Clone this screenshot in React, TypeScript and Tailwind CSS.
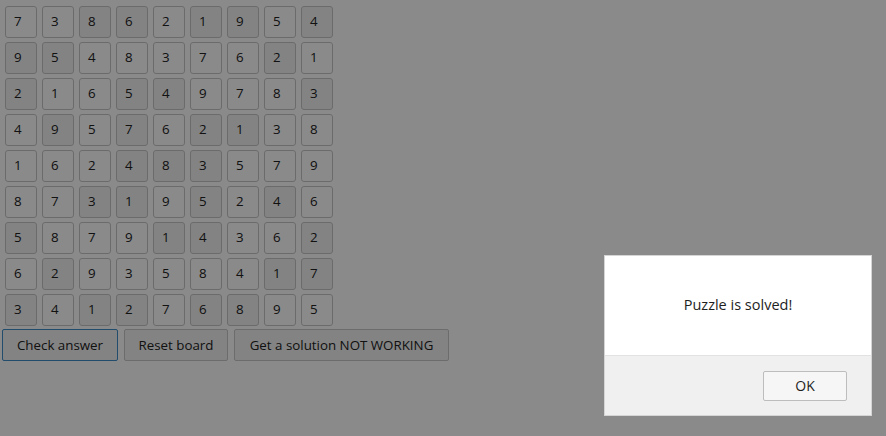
import React from "react";

const board = [
  [7, 3, 8, 6, 2, 1, 9, 5, 4],
  [9, 5, 4, 8, 3, 7, 6, 2, 1],
  [2, 1, 6, 5, 4, 9, 7, 8, 3],
  [4, 9, 5, 7, 6, 2, 1, 3, 8],
  [1, 6, 2, 4, 8, 3, 5, 7, 9],
  [8, 7, 3, 1, 9, 5, 2, 4, 6],
  [5, 8, 7, 9, 1, 4, 3, 6, 2],
  [6, 2, 9, 3, 5, 8, 4, 1, 7],
  [3, 4, 1, 2, 7, 6, 8, 9, 5],
];

// 1 = given (disabled) cell
const given = [
  [0, 0, 1, 1, 0, 1, 1, 0, 1],
  [1, 1, 0, 0, 0, 0, 0, 1, 0],
  [1, 0, 0, 1, 1, 0, 0, 0, 1],
  [0, 1, 0, 1, 0, 1, 1, 0, 0],
  [0, 0, 0, 1, 1, 1, 0, 0, 0],
  [0, 0, 1, 1, 0, 1, 0, 1, 0],
  [1, 0, 0, 0, 1, 1, 0, 0, 1],
  [0, 1, 0, 0, 0, 0, 0, 1, 1],
  [1, 0, 1, 1, 0, 1, 1, 0, 0],
];

export default function App() {
  return (
    <div
      className="relative h-[436px] w-[886px] overflow-hidden bg-white text-[#222]"
      style={{ fontFamily: '"Open Sans", sans-serif' }}
    >
      <div className="flex flex-col gap-[4px] pl-[5px] pt-[6px]">
        {board.map((row, r) => (
          <div key={r} className="flex gap-[5px]">
            {row.map((n, c) => (
              <div
                key={c}
                className={
                  "flex h-[32px] w-[32px] items-center rounded-[3px] border border-[#c6c6c6] pl-[8px] text-[13.333px] " +
                  (given[r][c] ? "bg-[#f3f3f3]" : "bg-white")
                }
              >
                {n}
              </div>
            ))}
          </div>
        ))}
      </div>

      <div className="mt-[3px] flex gap-[6px] pl-[2px] text-[13.333px]">
        <button className="h-[32px] w-[116px] rounded-[2px] border border-[#3f8cc8] bg-[#f3f3f3] pt-[2px]">
          Check answer
        </button>
        <button className="h-[32px] w-[104px] rounded-[2px] border border-[#c8c8c8] bg-[#f3f3f3] pt-[2px]">
          Reset board
        </button>
        <button className="h-[32px] w-[215px] rounded-[2px] border border-[#c8c8c8] bg-[#f3f3f3] pt-[2px]">
          Get a solution NOT WORKING
        </button>
      </div>

      <div className="absolute inset-0 bg-black/[0.46]" />

      <div className="absolute left-[604px] top-[255px] flex h-[161px] w-[268px] flex-col border border-[#d5d5d5] bg-white text-[14.5px]">
        <div className="flex h-[99px] items-center justify-center pb-[2px] text-[#1e1e1e]">
          Puzzle is solved!
        </div>
        <div className="flex flex-1 items-center justify-end border-t border-[#e2e2e2] bg-[#f0f0f0] pr-[24px]">
          <button className="h-[30px] w-[84px] rounded-[2px] border border-[#bdbdbd] bg-[#f6f6f6] text-[14px] text-[#1e1e1e]">
            OK
          </button>
        </div>
      </div>
    </div>
  );
}
